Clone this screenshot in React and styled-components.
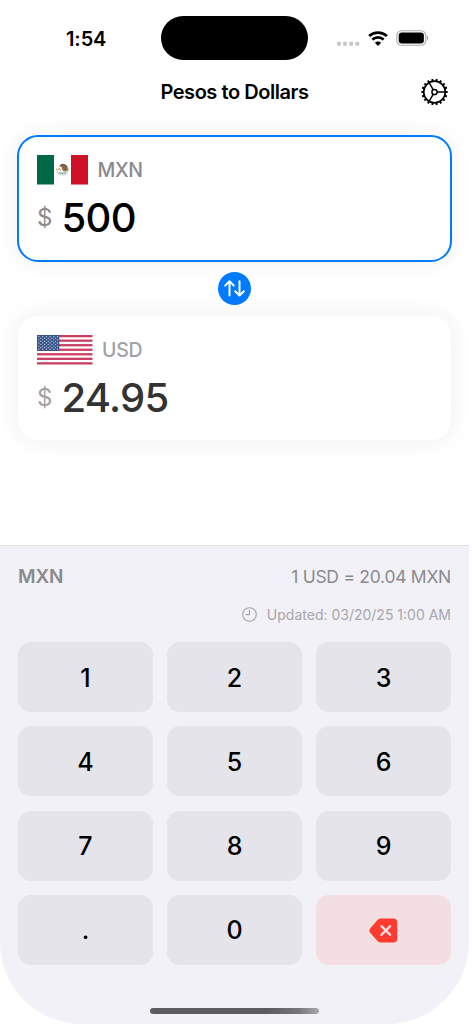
import { useState } from "react";
import styled, { createGlobalStyle } from "styled-components";

const GlobalStyle = createGlobalStyle`
  * {
    box-sizing: border-box;
  }

  body {
    margin: 0;
    background: #fff;
    font-family: Inter, "Liberation Sans", sans-serif;
    -webkit-font-smoothing: antialiased;
  }

  button {
    border: none;
    padding: 0;
    font-family: inherit;
    cursor: pointer;
  }
`;

const Screen = styled.div`
  width: 469px;
  height: 1023.5px;
  display: flex;
  flex-direction: column;
  overflow: hidden;
  background: #fff;
  border-radius: 0 0 82px 82px;
`;

const StatusBar = styled.div`
  height: 76px;
  flex: none;
  display: grid;
  grid-template-columns: 161px 147px 1fr;
  align-items: center;
`;

const Time = styled.span`
  padding: 1px 0 0 66px;
  font-size: 20px;
  line-height: 24px;
  font-weight: 600;
  letter-spacing: -0.1px;
`;

const Island = styled.div`
  height: 44px;
  border-radius: 22px;
  background: #000;
`;

const StatusIcons = styled.div`
  display: flex;
  align-items: center;
  padding-left: 27.5px;
`;

const NavBar = styled.header`
  height: 32px;
  flex: none;
  display: grid;
  grid-template-columns: 1fr auto 1fr;
  align-items: center;
  padding: 0 21px;
`;

const Title = styled.h1`
  grid-column: 2;
  margin: 0;
  font-size: 20px;
  line-height: 24px;
  font-weight: 600;
  letter-spacing: -0.45px;
`;

const SettingsButton = styled.button`
  justify-self: end;
  display: flex;
  background: none;
`;

const Converter = styled.main`
  flex: none;
  height: 436.5px;
  padding: 28px 18px 0;
  display: flex;
  flex-direction: column;
`;

const Card = styled.section`
  height: ${props => (props.$active ? "125px" : "124px")};
  padding: 19px 19px 0;
  border-radius: 20px;
  background: #fff;
  box-shadow: 0 0 24px rgba(0, 0, 0, 0.07);
  outline: ${props => (props.$active ? "2px solid #007aff" : "none")};
  outline-offset: -1px;
`;

const CurrencyRow = styled.div`
  height: 30px;
  display: flex;
  align-items: center;
  gap: 9.5px;
`;

const Code = styled.span`
  color: ${props => (props.$active ? "#8a8a8e" : "#a1a1a5")};
  font-size: 19.5px;
  line-height: 24px;
  font-weight: 500;
  letter-spacing: -0.3px;
`;

const AmountRow = styled.div`
  display: flex;
  align-items: center;
  height: 48px;
  margin-top: 9px;
`;

const Sign = styled.span`
  width: 24.5px;
  color: ${props => (props.$active ? "#8a8a8e" : "#a1a1a5")};
  font-size: 24px;
  line-height: 30px;
`;

const Amount = styled.span`
  color: ${props => (props.$active ? "#000" : "#333")};
  font-size: 40px;
  line-height: 48px;
  font-weight: 500;
  letter-spacing: -0.7px;
`;

const SwapRow = styled.div`
  height: 55px;
  display: flex;
  align-items: center;
  justify-content: center;
`;

const SwapButton = styled.button`
  width: 33px;
  height: 33px;
  border-radius: 50%;
  background: #007aff;
  display: flex;
  align-items: center;
  justify-content: center;
`;

const Panel = styled.section`
  flex: 1;
  padding: 17px 18px 0;
  background: #f2f1f7;
  border-top: 1px solid #e0e0e2;
  display: flex;
  flex-direction: column;
`;

const RateRow = styled.div`
  height: 28px;
  display: flex;
  align-items: center;
  justify-content: space-between;
  color: #8a8a8e;
`;

const ActiveCode = styled.span`
  font-size: 19px;
  line-height: 24px;
  font-weight: 600;
  letter-spacing: -0.1px;
`;

const Rate = styled.span`
  font-size: 17.5px;
  line-height: 24px;
  letter-spacing: -0.27px;
`;

const UpdatedRow = styled.div`
  height: 20px;
  margin-top: 14px;
  display: flex;
  align-items: center;
  justify-content: flex-end;
  gap: 10px;
  color: #a7a6ab;
  font-size: 14px;
  line-height: 20px;
`;

const Keypad = styled.div`
  margin-top: 17.5px;
  display: grid;
  grid-template-columns: repeat(3, 135px);
  grid-auto-rows: 70px;
  gap: 14.33px 14px;
`;

const Key = styled.button`
  display: flex;
  align-items: center;
  justify-content: center;
  padding-top: 1px;
  border-radius: 13px;
  background: ${props => (props.$danger ? "#f3dfe1" : "#e5e4ea")};
  color: #000;
  font-size: 25px;
  line-height: 30px;
  font-weight: 500;
`;

const HomeIndicator = styled.div`
  width: 169px;
  height: 6px;
  margin: 43.5px auto 0;
  border-radius: 3px;
  background: linear-gradient(90deg, #5d5d60 0%, #5d5d60 70%, #77777a 88%, #a9a9ad 100%);
`;

const Dots = styled.svg`
  margin-top: 11px;
`;

const StatusGlyph = styled.svg`
  margin-left: 8px;
`;

function CellularDots() {
  return (
    <Dots width="24" height="6" viewBox="0 0 24 6" fill="#c9c9c9">
      {[3, 9.1, 15.2, 21.3].map(cx => (
        <circle key={cx} cx={cx} cy="2.8" r="2.2" />
      ))}
    </Dots>
  );
}

function WifiIcon() {
  return (
    <StatusGlyph width="20" height="15" viewBox="0 0 20 15" fill="none" stroke="#000">
      <path d="M1.1 5.1C6.1 0.5 13.9 0.5 18.9 5.1" strokeWidth="2.7" />
      <path d="M4.3 8.5C7.5 5.6 12.5 5.6 15.7 8.5" strokeWidth="2.6" />
      <path d="M10 14.9L6.9 11.8C8.7 10.2 11.3 10.2 13.1 11.8Z" fill="#000" stroke="none" />
    </StatusGlyph>
  );
}

function BatteryIcon() {
  return (
    <StatusGlyph width="33" height="16" viewBox="0 0 33 16" fill="none">
      <rect x="0.8" y="0.7" width="29" height="14.6" rx="4.8" stroke="#a9a9a9" strokeWidth="1.1" />
      <rect x="2.7" y="2.6" width="25.2" height="10.8" rx="3.2" fill="#000" />
      <path d="M31 5.7C32.5 6.3 32.5 9.7 31 10.3Z" fill="#a0a0a0" />
    </StatusGlyph>
  );
}

function GearIcon() {
  const teeth = Array.from({ length: 18 }, (_, i) => i * 20);
  const spokes = [0, 120, 240];
  return (
    <svg width="27" height="28" viewBox="-13.5 -14 27 28" fill="none" stroke="#000">
      <circle r="10.8" strokeWidth="1.7" />
      <circle r="2.6" strokeWidth="1.5" />
      {teeth.map(angle => (
        <path key={angle} d="M11 0H13.2" strokeWidth="1.9" transform={`rotate(${angle})`} />
      ))}
      {spokes.map(angle => (
        <path key={angle} d="M2.7 0H10.8" strokeWidth="1.5" transform={`rotate(${angle})`} />
      ))}
    </svg>
  );
}

function MexicoFlag() {
  return (
    <svg width="51" height="29.5" viewBox="0 0 51 29.5">
      <rect width="51" height="29.5" fill="#fff" />
      <rect width="17" height="29.5" fill="#006847" />
      <rect x="34" width="17" height="29.5" fill="#ce1126" />
      <path d="M19.5 13.5C19.7 17.5 22 20 25.5 20S31.3 17.5 31.5 13.5" fill="none" stroke="#c3c8ac" strokeWidth="1.3" strokeDasharray="1.6 0.7" />
      <path d="M22 17.3Q25.5 19.2 29 17.3" fill="none" stroke="#74b9b1" strokeWidth="1.5" />
      <path d="M22.3 11.3C22.8 9.6 24.3 8.7 26 8.8C29 9 31 11 31.2 14.5C30.8 15.8 29.6 16.6 28.2 16.5C26.5 16.5 25.3 15.6 24.9 14.2C24.4 13.1 25 12.3 24.1 12Z" fill="#9a7a55" />
      <path d="M23.2 10.9C25.2 9 28.6 9.8 29.7 12.4M26 11.8C27.6 12.2 28.4 13.5 28.3 15" fill="none" stroke="#55432f" strokeWidth="1" />
      <path d="M20.6 14.4L24 15.2M21.2 13L23.4 13.8" stroke="#cfab6c" strokeWidth="1" />
    </svg>
  );
}

function UsaFlag() {
  const stripe = 29.5 / 13;
  const stars = [];
  for (let row = 0; row < 9; row++) {
    for (let col = row % 2; col < 11; col += 2) {
      stars.push([1.9 + col * 1.86, 1.65 + row * 1.57]);
    }
  }
  return (
    <svg width="55.5" height="29.5" viewBox="0 0 55.5 29.5">
      <rect width="55.5" height="29.5" fill="#fff" />
      {[0, 2, 4, 6, 8, 10, 12].map(i => (
        <rect key={i} y={i * stripe} width="55.5" height={stripe} fill="#ca3e60" />
      ))}
      <rect width="22.3" height={stripe * 7} fill="#34548b" />
      {stars.map(([x, y]) => (
        <circle key={`${x}-${y}`} cx={x} cy={y} r="0.6" fill="#dce3ee" />
      ))}
    </svg>
  );
}

function SwapIcon() {
  return (
    <svg width="21" height="17" viewBox="0 0 21 17" fill="none" stroke="#fff" strokeWidth="2" strokeLinecap="round" strokeLinejoin="round">
      <path d="M5.5 15.5V1.5M1.2 5.6L5.5 1.3L9.8 5.6" />
      <path d="M15.5 1.3V15.4M11.2 11.3L15.5 15.6L19.8 11.3" />
    </svg>
  );
}

function ClockIcon() {
  return (
    <svg width="15" height="15" viewBox="0 0 15 15" fill="none" stroke="#a3a2a7" strokeWidth="1.1" strokeLinecap="round" strokeLinejoin="round">
      <circle cx="7.5" cy="7.5" r="6.8" />
      <path d="M7.5 3.2V7.6H4.1" />
    </svg>
  );
}

function DeleteIcon() {
  return (
    <svg width="29" height="25" viewBox="0 0 29 25">
      <path d="M11.6 0.5H24.4Q28.2 0.5 28.2 4.3V20.7Q28.2 24.5 24.4 24.5H11.6Q9.9 24.5 8.5 23.1L1.3 15Q-0.5 12.5 1.3 10.3L8.5 2Q9.7 0.5 11.6 0.5Z" fill="#ff3b30" />
      <path d="M12.4 8.1L21.2 16.9M21.2 8.1L12.4 16.9" stroke="#f5dfe1" strokeWidth="2.2" strokeLinecap="round" />
    </svg>
  );
}

const keys = ["1", "2", "3", "4", "5", "6", "7", "8", "9", ".", "0"];
const rate = 20.04;

function App() {
  const [amount, setAmount] = useState("500");

  const press = key => {
    if (key === "." && amount.includes(".")) return;
    setAmount(amount === "0" && key !== "." ? key : amount + key);
  };

  return (
    <>
      <GlobalStyle />
      <Screen>
        <StatusBar>
          <Time>1:54</Time>
          <Island />
          <StatusIcons>
            <CellularDots />
            <WifiIcon />
            <BatteryIcon />
          </StatusIcons>
        </StatusBar>
        <NavBar>
          <Title>Pesos to Dollars</Title>
          <SettingsButton type="button">
            <GearIcon />
          </SettingsButton>
        </NavBar>
        <Converter>
          <Card $active>
            <CurrencyRow>
              <MexicoFlag />
              <Code $active>MXN</Code>
            </CurrencyRow>
            <AmountRow>
              <Sign $active>$</Sign>
              <Amount $active>{amount}</Amount>
            </AmountRow>
          </Card>
          <SwapRow>
            <SwapButton type="button">
              <SwapIcon />
            </SwapButton>
          </SwapRow>
          <Card>
            <CurrencyRow>
              <UsaFlag />
              <Code>USD</Code>
            </CurrencyRow>
            <AmountRow>
              <Sign>$</Sign>
              <Amount>{(Number(amount) / rate).toFixed(2)}</Amount>
            </AmountRow>
          </Card>
        </Converter>
        <Panel>
          <RateRow>
            <ActiveCode>MXN</ActiveCode>
            <Rate>1 USD = {rate} MXN</Rate>
          </RateRow>
          <UpdatedRow>
            <ClockIcon />
            <span>Updated: 03/20/25 1:00 AM</span>
          </UpdatedRow>
          <Keypad>
            {keys.map(key => (
              <Key key={key} type="button" onClick={() => press(key)}>
                {key}
              </Key>
            ))}
            <Key $danger type="button" onClick={() => setAmount(amount.slice(0, -1) || "0")}>
              <DeleteIcon />
            </Key>
          </Keypad>
          <HomeIndicator />
        </Panel>
      </Screen>
    </>
  );
}

export default App;
